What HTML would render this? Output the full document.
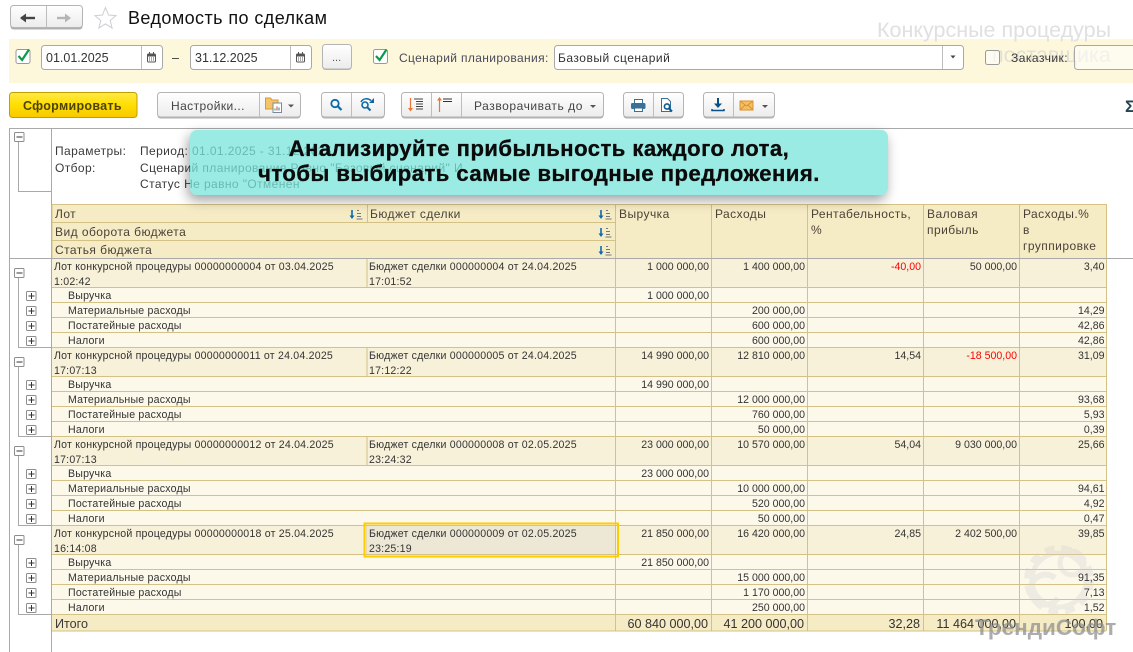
<!DOCTYPE html>
<html lang="ru"><head><meta charset="utf-8"><title>Ведомость по сделкам</title>
<style>
html,body{margin:0;padding:0;background:#fff;width:1133px;height:652px;overflow:hidden}
svg{position:absolute;left:0;top:0;display:block}
text{font-family:"Liberation Sans",sans-serif;fill:#333;white-space:pre}
.t{font-size:10.6px;letter-spacing:.2px}
.n{font-size:10.6px;text-anchor:end}
.r{fill:#f00}
.h{font-size:12px;fill:#4a4238;letter-spacing:.45px}
.s{font-size:12px;fill:#3a3a3a;letter-spacing:.4px}
.f{font-size:12.6px;text-anchor:end}
.b{fill:url(#btn);stroke:#b4b4b4}
.sh{fill:#b0b0b0}
.d{stroke:#bdbdbd}
.i{fill:#fff;stroke:#a8a8a8}
.g{stroke:#a9a9a9;fill:none}
.l{stroke:#d3c185}
#callout{position:absolute;left:190px;top:130px;width:698px;height:65px;border-radius:7px;background:rgba(120,228,218,.75);box-shadow:-2px 5px 12px rgba(0,0,0,.38)}
#callout div{position:absolute;left:0;width:100%;text-align:center;font:bold 22px "Liberation Sans",sans-serif;letter-spacing:.5px;-webkit-text-stroke:.35px #0b0b0b;color:#0b0b0b;white-space:nowrap}
</style></head><body>
<svg width="1133" height="652" viewBox="0 0 1133 652" xmlns="http://www.w3.org/2000/svg">
<defs>
<linearGradient id="btn" x1="0" y1="0" x2="0" y2="1"><stop offset="0" stop-color="#fff"/><stop offset="1" stop-color="#ececec"/></linearGradient>
<linearGradient id="yb" x1="0" y1="0" x2="0" y2="1"><stop offset="0" stop-color="#ffe94a"/><stop offset=".5" stop-color="#ffde00"/><stop offset="1" stop-color="#f7c800"/></linearGradient>
<g id="minus"><rect x="14.5" y=".5" width="9.5" height="9" rx="1" fill="#fff" stroke="#8d8d8d"/><path d="M16.5 5h6" stroke="#333"/></g>
<g id="plus"><rect x="26.5" y=".5" width="9.5" height="9" rx="1" fill="#fff" stroke="#8d8d8d"/><path d="M28.5 5h6M31.5 2v6" stroke="#333"/></g>
<g id="grp">
<rect x="52" y="0" width="1054" height="29" fill="#f8f1da"/>
<rect x="52" y="29" width="1054" height="60" fill="#fcf8ea"/>
<path class="l" d="M52 .5H1106M52 29.5H1106M52 44.5H1106M52 59.5H1106M52 74.5H1106M367 0V29M615.5 0V89M711.5 0V89M807.5 0V89M923.5 0V89M1019.5 0V89M1106.5 0V89"/>
<use href="#minus" y="10"/>
<path class="g" d="M18.5 20V89.5H51"/>
<use href="#plus" y="33"/><use href="#plus" y="48"/><use href="#plus" y="63"/><use href="#plus" y="78"/>
</g>
<g id="sort"><path d="M3 2v7" stroke="#0a6ab0" stroke-width="1.6"/><path d="M.5 7.5h5L3 11z" fill="#0a6ab0"/><path d="M8 2.5h2M8 5.5h4M8 8.5h4M7.5 11h6" stroke="#777" stroke-width="1"/></g>
<g id="cal"><rect x=".5" y="2" width="8" height="8" rx="1" fill="#fff" stroke="#555"/><path d="M1 2.5h7v2H1z" fill="#555"/><path d="M2.5 0v2M6.5 0v2" stroke="#555"/><path d="M2 6h1M4 6h1M6 6h1M2 8h1M4 8h1M6 8h1" stroke="#555"/></g>
<g id="chk"><rect x=".5" y="1.5" width="14" height="14" rx="2" fill="#fff" stroke="#9a9a9a"/><path d="M3 8l3.6 4L13.5 1.5" fill="none" stroke="#0c9a4a" stroke-width="2.2"/></g>
</defs>

<!-- top bar -->
<rect x="10.5" y="7.5" width="72" height="22" rx="3" class="sh"/>
<rect x="10" y="6" width="72" height="22" rx="3" class="b" transform="translate(.5 -.5)"/>
<path class="d" d="M46.5 6V28"/>
<path d="M21 18h14" stroke="#444" stroke-width="2.4"/><path d="M21 13.5V22.5L27 18z" transform="translate(-1 0) rotate(180 24 18)" fill="#444"/>
<path d="M57 18h12" stroke="#b5b5b5" stroke-width="2.4"/><path d="M65 13.5V22.5L71 18z" fill="#b5b5b5"/>
<path d="M105.5 7.5l3 7.5 7.5.6-5.8 4.9 1.9 7.5-6.6-4.1-6.6 4.1 1.9-7.5-5.8-4.9 7.5-.6z" fill="#fff" stroke="#c9cfd3"/>
<text x="128" y="24" style="font-size:18px;letter-spacing:.42px;fill:#111">Ведомость по сделкам</text>

<!-- filter band -->
<rect x="9" y="39" width="1124" height="44" fill="#fdf7dc"/>
<text x="877" y="37" style="font-size:21.5px;fill:#e0e0e0">Конкурсные процедуры</text>
<text x="992" y="62" style="font-size:21.5px;fill:#e2e0d4">поставщика</text>
<use href="#chk" x="15.5" y="48"/>
<rect x="41.5" y="45.5" width="121" height="24" rx="3" class="i"/><path class="d" d="M141.5 46V69"/>
<text x="46" y="62" style="font-size:12.5px;fill:#333">01.01.2025</text>
<use href="#cal" x="147" y="52"/>
<text x="172" y="62" style="font-size:12.5px;fill:#333">–</text>
<rect x="190.5" y="45.5" width="121" height="24" rx="3" class="i"/><path class="d" d="M290.5 46V69"/>
<text x="195" y="62" style="font-size:12.5px;fill:#333">31.12.2025</text>
<use href="#cal" x="296" y="52"/>
<rect x="322.5" y="45" width="29" height="25" rx="3" class="sh"/>
<rect x="322.5" y="44.5" width="29" height="24.5" rx="3" class="b"/>
<text x="332" y="61" style="font-size:11px;fill:#555">...</text>
<use href="#chk" x="373" y="48"/>
<text x="399" y="62" style="font-size:12px;letter-spacing:.36px;fill:#4a4a5a">Сценарий планирования:</text>
<rect x="554.5" y="45.5" width="409" height="24" rx="3" class="i"/><path class="d" d="M942.5 46V69"/>
<text x="558" y="62" style="font-size:12px;letter-spacing:.5px;fill:#333">Базовый сценарий</text>
<path d="M950.5 55.5h5l-2.5 3z" fill="#444"/>
<rect x="985.5" y="50.5" width="14" height="14" rx="2" fill="#fff" fill-opacity=".6" stroke="#9a9a9a"/>
<text x="1011" y="62" style="font-size:12px;letter-spacing:.5px;fill:#3a3a3a">Заказчик:</text>
<rect x="1074.5" y="45.5" width="70" height="24" rx="3" fill="#fff" fill-opacity=".55" stroke="#a8a8a8"/>

<!-- toolbar -->
<rect x="9.5" y="92.5" width="127.5" height="25" rx="3" fill="url(#yb)" stroke="#c0a000"/>
<text x="23" y="110" style="font-size:12.5px;font-weight:bold;letter-spacing:.3px;fill:#4c4300">Сформировать</text>

<rect x="157.5" y="93.5" width="143" height="25" rx="3" class="sh"/>
<rect x="157.5" y="92.5" width="143" height="24.5" rx="3" class="b"/>
<path class="d" d="M259.5 93V117"/>
<text x="171" y="110" style="font-size:12px;letter-spacing:.42px;fill:#444">Настройки...</text>
<path d="M265.5 98h5l1.5 2h6v9h-12.5z" fill="#f5c46a" stroke="#d99a30"/>
<rect x="273" y="103" width="8.5" height="9.5" fill="#fff" stroke="#7a8a9a"/><path d="M275 110.5v-2" stroke="#2a9a4a"/><path d="M277 110.5v-4" stroke="#d04030"/><path d="M279 110.5v-3" stroke="#3070c0"/>
<path d="M288 104.5h6l-3 3z" fill="#555"/>

<rect x="321.5" y="93.5" width="63" height="25" rx="3" class="sh"/>
<rect x="321.5" y="92.5" width="63" height="24.5" rx="3" class="b"/>
<path class="d" d="M351.5 93V117"/>
<circle cx="335" cy="103.5" r="3.7" fill="none" stroke="#0a6aa8" stroke-width="1.8"/><path d="M338 106.5l3.5 3.5" stroke="#0a6aa8" stroke-width="2.2"/>
<circle cx="365" cy="105" r="3" fill="none" stroke="#0a6aa8" stroke-width="1.6"/><path d="M367.5 107.5l3 3" stroke="#0a6aa8" stroke-width="2"/><path d="M361 102c2-4 7-4 10-1.5" fill="none" stroke="#0a6aa8" stroke-width="1.5"/><path d="M374 98v5h-5z" fill="#0a6aa8"/>

<rect x="401.5" y="93.5" width="202" height="25" rx="3" class="sh"/>
<rect x="401.5" y="92.5" width="202" height="24.5" rx="3" class="b"/>
<path class="d" d="M431.5 93V117M461.5 93V117"/>
<path d="M410.5 98v12" stroke="#e8763a" stroke-width="1.2"/><path d="M408 108h5l-2.5 3.5z" fill="#e8763a"/>
<path d="M414 99h9M416 101.5h7M416 104h7M416 106.5h7M416 109h7" stroke="#444"/>
<path d="M439.5 100v12" stroke="#e8763a" stroke-width="1.2"/><path d="M437 100.5h5l-2.5-3.5z" fill="#e8763a"/>
<path d="M443 99h9M443 101.5h9" stroke="#333"/>
<text x="474" y="110" style="font-size:12px;letter-spacing:.56px;fill:#444">Разворачивать до</text>
<path d="M590 105h6l-3 3z" fill="#555"/>

<rect x="623.5" y="93.5" width="60" height="25" rx="3" class="sh"/>
<rect x="623.5" y="92.5" width="60" height="24.5" rx="3" class="b"/>
<path class="d" d="M653.5 93V117"/>
<path d="M634.5 99.5h8v4h-8z" fill="#fff" stroke="#3a6f96"/><rect x="631" y="103" width="14.5" height="6" rx="1.5" fill="#3a6f96"/><path d="M634.5 108h8v3.5h-8z" fill="#fff" stroke="#3a6f96"/>
<path d="M661.5 98.5h6l3 3v10h-9z" fill="#fff" stroke="#3a6f96"/><circle cx="667" cy="106.5" r="2.6" fill="none" stroke="#0a5a90" stroke-width="1.6"/><path d="M669 108.5l3 3" stroke="#0a5a90" stroke-width="2"/>

<rect x="703.5" y="93.5" width="71" height="25" rx="3" class="sh"/>
<rect x="703.5" y="92.5" width="71" height="24.5" rx="3" class="b"/>
<path class="d" d="M733.5 93V117"/>
<path d="M718 98v7" stroke="#0a4f85" stroke-width="2"/><path d="M714 103.5h8l-4 4.5z" fill="#0a4f85"/><path d="M712 109v1.5h12V109" fill="none" stroke="#0a4f85" stroke-width="1.5"/>
<rect x="740" y="101" width="13" height="9" fill="#f5c060" stroke="#dd9030"/><path d="M740 101l6.5 5 6.5-5M740 110l5-5M753 110l-5-5" fill="none" stroke="#dd9030"/>
<path d="M762 105h6l-3 3z" fill="#555"/>
<text x="1125" y="112" style="font-size:17px;font-weight:bold;fill:#24444f">Σ</text>

<!-- report frame -->
<path class="g" d="M9.5 128V652M51.5 128V652M9 128.5H1133"/>
<use href="#minus" y="132"/>
<path class="g" d="M18.5 142V191.5H51"/>
<text class="s" x="55" y="155">Параметры:</text>
<text class="s" x="140" y="155">Период: 01.01.2025 - 31.12.2025</text>
<text class="s" x="55" y="172">Отбор:</text>
<text class="s" x="140" y="172">Сценарий планирования Равно "Базовый сценарий" И</text>
<text class="s" x="140" y="188">Статус Не равно "Отменен"</text>

<!-- header -->
<rect x="52" y="204" width="1054" height="54" fill="#f5ebc5"/>
<path class="l" d="M52 204.5H1106M52 222.5H616M52 240.5H616M52 204V258M367.5 204V222M615.5 204V258M711.5 204V258M807.5 204V258M923.5 204V258M1019.5 204V258M1106.5 204V258"/>
<text class="h" x="55" y="218">Лот</text>
<text class="h" x="370" y="218">Бюджет сделки</text>
<text class="h" x="55" y="236">Вид оборота бюджета</text>
<text class="h" x="55" y="254">Статья бюджета</text>
<use href="#sort" x="349" y="208"/><use href="#sort" x="598" y="208"/><use href="#sort" x="598" y="226"/><use href="#sort" x="598" y="244"/>
<text class="h" x="619" y="218">Выручка</text>
<text class="h" x="715" y="218">Расходы</text>
<text class="h" x="811" y="218">Рентабельность,</text><text class="h" x="811" y="234">%</text>
<text class="h" x="927" y="218">Валовая</text><text class="h" x="927" y="234">прибыль</text>
<text class="h" x="1023" y="218">Расходы.%</text><text class="h" x="1023" y="234">в</text><text class="h" x="1023" y="250">группировке</text>

<!-- groups -->
<use href="#grp" y="258"/><use href="#grp" y="347"/><use href="#grp" y="436"/><use href="#grp" y="525"/>
<path class="g" d="M9 258.5H1133"/>

<!-- selected cell -->
<rect x="367" y="526" width="248" height="28" fill="#ede8d6"/>
<rect x="364.5" y="523.5" width="253.5" height="33" fill="none" stroke="#ffcc00" stroke-width="2"/>

<!-- total row -->
<rect x="52" y="614" width="1054" height="17" fill="#f5ebc5"/>
<path class="l" d="M52 614.5H1106M52 631H1106M615.5 614V631M711.5 614V631M807.5 614V631M923.5 614V631M1019.5 614V631M1106.5 614V631"/>

<!-- logo watermark -->
<g opacity=".3" fill="none" stroke="#d0d0d0">
<circle cx="1059" cy="580" r="32" stroke-width="6" stroke-dasharray="10 7"/>
<circle cx="1059" cy="580" r="27" stroke-width="5"/>
<circle cx="1072" cy="563" r="12" stroke-width="5"/>
<path d="M1055 578a15 15 0 1 0 3 20" stroke-width="6"/>
</g>

<!-- group 1 -->
<text class="t" x="54" y="270">Лот конкурсной процедуры 00000000004 от 03.04.2025</text><text class="t" x="54" y="285">1:02:42</text>
<text class="t" x="369" y="270">Бюджет сделки 000000004 от 24.04.2025</text><text class="t" x="369" y="285">17:01:52</text>
<text class="n" x="709" y="270">1 000 000,00</text><text class="n" x="805" y="270">1 400 000,00</text><text class="n r" x="921" y="270">-40,00</text><text class="n" x="1017" y="270">50 000,00</text><text class="n" x="1104.5" y="270">3,40</text>
<text class="t" x="68" y="299">Выручка</text><text class="n" x="709" y="299">1 000 000,00</text>
<text class="t" x="68" y="314">Материальные расходы</text><text class="n" x="805" y="314">200 000,00</text><text class="n" x="1104.5" y="314">14,29</text>
<text class="t" x="68" y="329">Постатейные расходы</text><text class="n" x="805" y="329">600 000,00</text><text class="n" x="1104.5" y="329">42,86</text>
<text class="t" x="68" y="344">Налоги</text><text class="n" x="805" y="344">600 000,00</text><text class="n" x="1104.5" y="344">42,86</text>

<!-- group 2 -->
<text class="t" x="54" y="359">Лот конкурсной процедуры 00000000011 от 24.04.2025</text><text class="t" x="54" y="374">17:07:13</text>
<text class="t" x="369" y="359">Бюджет сделки 000000005 от 24.04.2025</text><text class="t" x="369" y="374">17:12:22</text>
<text class="n" x="709" y="359">14 990 000,00</text><text class="n" x="805" y="359">12 810 000,00</text><text class="n" x="921" y="359">14,54</text><text class="n r" x="1017" y="359">-18 500,00</text><text class="n" x="1104.5" y="359">31,09</text>
<text class="t" x="68" y="388">Выручка</text><text class="n" x="709" y="388">14 990 000,00</text>
<text class="t" x="68" y="403">Материальные расходы</text><text class="n" x="805" y="403">12 000 000,00</text><text class="n" x="1104.5" y="403">93,68</text>
<text class="t" x="68" y="418">Постатейные расходы</text><text class="n" x="805" y="418">760 000,00</text><text class="n" x="1104.5" y="418">5,93</text>
<text class="t" x="68" y="433">Налоги</text><text class="n" x="805" y="433">50 000,00</text><text class="n" x="1104.5" y="433">0,39</text>

<!-- group 3 -->
<text class="t" x="54" y="448">Лот конкурсной процедуры 00000000012 от 24.04.2025</text><text class="t" x="54" y="463">17:07:13</text>
<text class="t" x="369" y="448">Бюджет сделки 000000008 от 02.05.2025</text><text class="t" x="369" y="463">23:24:32</text>
<text class="n" x="709" y="448">23 000 000,00</text><text class="n" x="805" y="448">10 570 000,00</text><text class="n" x="921" y="448">54,04</text><text class="n" x="1017" y="448">9 030 000,00</text><text class="n" x="1104.5" y="448">25,66</text>
<text class="t" x="68" y="477">Выручка</text><text class="n" x="709" y="477">23 000 000,00</text>
<text class="t" x="68" y="492">Материальные расходы</text><text class="n" x="805" y="492">10 000 000,00</text><text class="n" x="1104.5" y="492">94,61</text>
<text class="t" x="68" y="507">Постатейные расходы</text><text class="n" x="805" y="507">520 000,00</text><text class="n" x="1104.5" y="507">4,92</text>
<text class="t" x="68" y="522">Налоги</text><text class="n" x="805" y="522">50 000,00</text><text class="n" x="1104.5" y="522">0,47</text>

<!-- group 4 -->
<text class="t" x="54" y="537">Лот конкурсной процедуры 00000000018 от 25.04.2025</text><text class="t" x="54" y="552">16:14:08</text>
<text class="t" x="369" y="537">Бюджет сделки 000000009 от 02.05.2025</text><text class="t" x="369" y="552">23:25:19</text>
<text class="n" x="709" y="537">21 850 000,00</text><text class="n" x="805" y="537">16 420 000,00</text><text class="n" x="921" y="537">24,85</text><text class="n" x="1017" y="537">2 402 500,00</text><text class="n" x="1104.5" y="537">39,85</text>
<text class="t" x="68" y="566">Выручка</text><text class="n" x="709" y="566">21 850 000,00</text>
<text class="t" x="68" y="581">Материальные расходы</text><text class="n" x="805" y="581">15 000 000,00</text><text class="n" x="1104.5" y="581">91,35</text>
<text class="t" x="68" y="596">Постатейные расходы</text><text class="n" x="805" y="596">1 170 000,00</text><text class="n" x="1104.5" y="596">7,13</text>
<text class="t" x="68" y="611">Налоги</text><text class="n" x="805" y="611">250 000,00</text><text class="n" x="1104.5" y="611">1,52</text>

<!-- total -->
<text x="55" y="628" style="font-size:12.6px;fill:#3a3a3a">Итого</text>
<text class="f" x="708" y="628">60 840 000,00</text><text class="f" x="804" y="628">41 200 000,00</text><text class="f" x="920" y="628">32,28</text><text class="f" x="1016" y="628">11 464 000,00</text><text class="f" x="1103" y="628">100,00</text>
<text x="975" y="635" style="font-size:22.5px;font-weight:bold;fill:#8c8c8c;fill-opacity:.72">ТрендиСофт</text>
</svg>

<div id="callout">
<div style="top:6px">Анализируйте прибыльность каждого лота,</div>
<div style="top:31px">чтобы выбирать самые выгодные предложения.</div>
</div>
</body></html>
